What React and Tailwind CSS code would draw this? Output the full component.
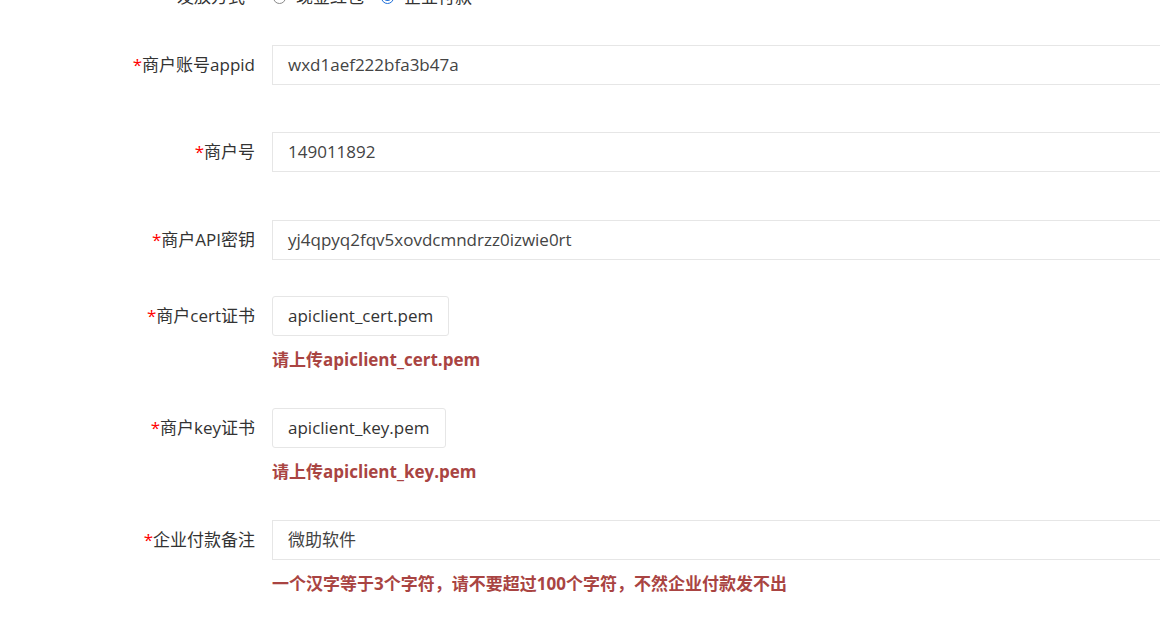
import React from 'react'

const font = { fontFamily: '"Open Sans", "Noto Sans CJK SC", sans-serif' }

function Label({ children, required = true }) {
  return (
    <div className="w-[255px] shrink-0 text-right text-[17px] text-[#333]">
      {required && <span className="text-[#ff0000]">*</span>}
      {children}
    </div>
  )
}

function TextRow({ label, value, className = '' }) {
  return (
    <div className={`flex items-center gap-[17px] ${className}`}>
      <Label>{label}</Label>
      <div className="flex-1 h-[40px] border border-[#e6e6e6] bg-white pl-[15px] flex items-center text-[17px] text-[#444]">
        {value}
      </div>
    </div>
  )
}

function FileRow({ label, file, hint, className = '' }) {
  return (
    <div className={className}>
      <div className="flex items-center gap-[17px]">
        <Label>{label}</Label>
        <div className="h-[40px] px-[15px] border border-[#e6e6e6] rounded-[3px] bg-white flex items-center text-[17px] text-[#333]">
          {file}
        </div>
      </div>
      <div className="ml-[272px] mt-[12px] leading-[24px] text-[17px] font-bold text-[#a94442]">{hint}</div>
    </div>
  )
}

function Radio({ checked, children }) {
  return (
    <label className="flex items-center gap-[10px]">
      {checked ? (
        <span className="w-[13px] h-[13px] rounded-full border border-[#1e6fd9] flex items-center justify-center">
          <span className="w-[7px] h-[7px] rounded-full bg-[#1e6fd9]" />
        </span>
      ) : (
        <span className="w-[13px] h-[13px] rounded-full border border-[#8a8a8a] bg-white" />
      )}
      <span>{children}</span>
    </label>
  )
}

export default function App() {
  return (
    <div className="w-full h-[620px] overflow-hidden bg-white" style={font}>
      <div className="w-[1200px]">
        {/* 发放方式 (scrolled mostly out of view) */}
        <div className="flex items-center gap-[17px] h-[40px] -mt-[23px] mb-[28px]">
          <div className="w-[255px] shrink-0 text-right text-[17px] text-[#333] pr-[10px]">发放方式</div>
          <div className="flex items-center gap-[17px] text-[17px] text-[#333] pl-[1px]">
            <Radio>现金红包</Radio>
            <Radio checked>企业付款</Radio>
          </div>
        </div>

        <TextRow label="商户账号appid" value="wxd1aef222bfa3b47a" className="mb-[47px]" />
        <TextRow label="商户号" value="149011892" className="mb-[48px]" />
        <TextRow label="商户API密钥" value="yj4qpyq2fqv5xovdcmndrzz0izwie0rt" className="mb-[36px]" />

        <FileRow label="商户cert证书" file="apiclient_cert.pem" hint="请上传apiclient_cert.pem" className="mb-[36px]" />
        <FileRow label="商户key证书" file="apiclient_key.pem" hint="请上传apiclient_key.pem" className="mb-[36px]" />

        <div>
          <TextRow label="企业付款备注" value="微助软件" />
          <div className="ml-[272px] mt-[12px] leading-[24px] text-[17px] font-bold text-[#a94442]">
            一个汉字等于3个字符，请不要超过100个字符，不然企业付款发不出
          </div>
        </div>
      </div>
    </div>
  )
}
